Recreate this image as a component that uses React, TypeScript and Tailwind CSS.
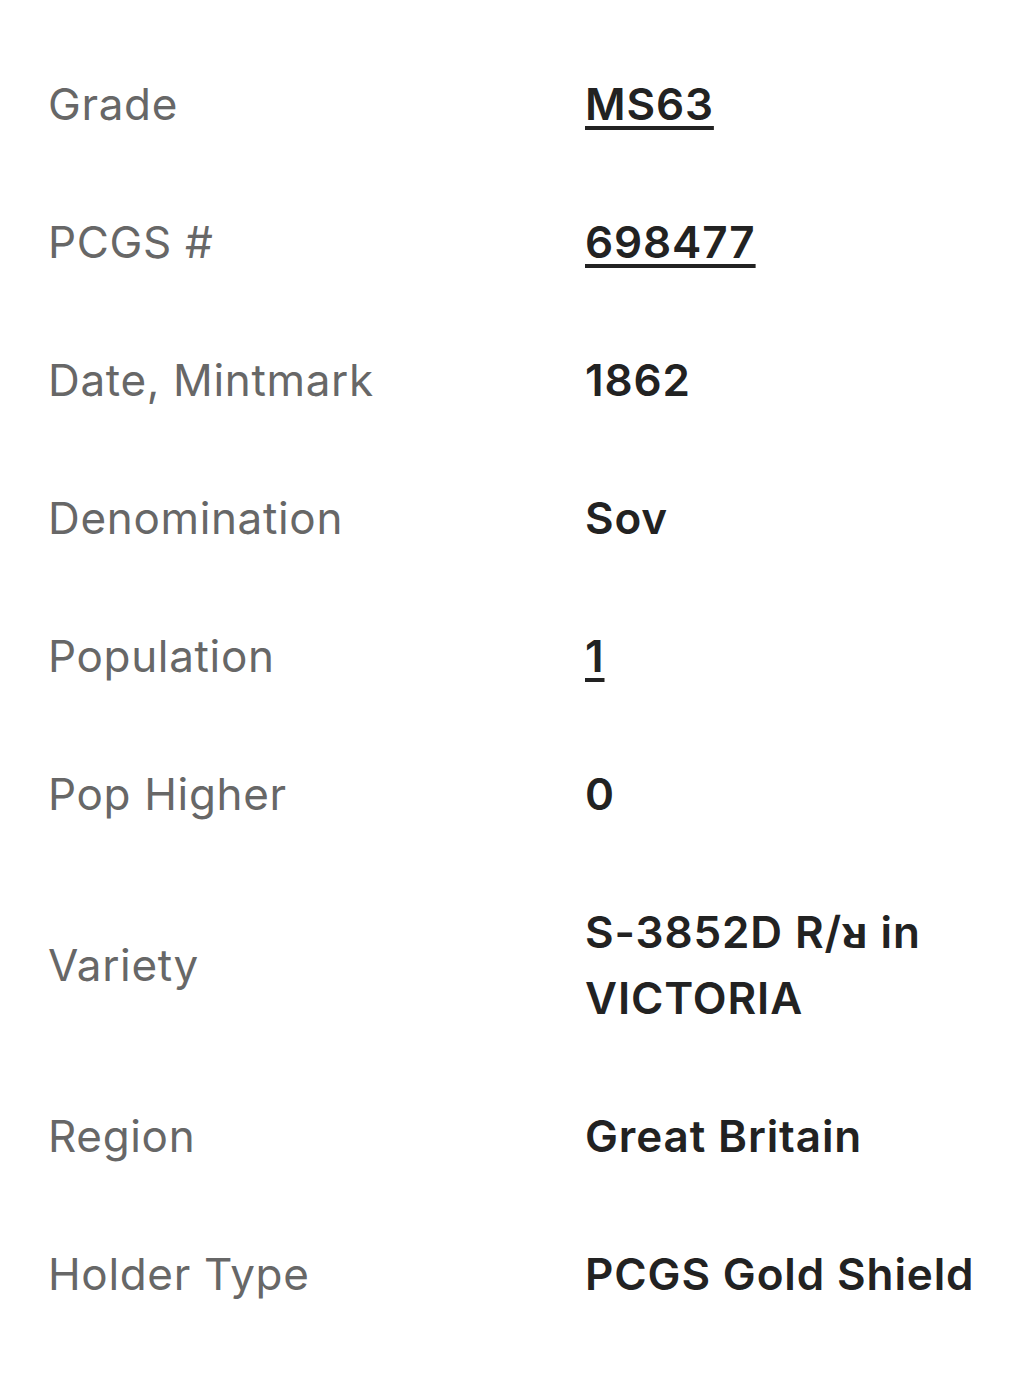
const rows: { label: string; value: string; link?: boolean }[] = [
  { label: "Grade", value: "MS63", link: true },
  { label: "PCGS #", value: "698477", link: true },
  { label: "Date, Mintmark", value: "1862" },
  { label: "Denomination", value: "Sov" },
  { label: "Population", value: "1", link: true },
  { label: "Pop Higher", value: "0" },
  { label: "Variety", value: "S-3852D R/ᴚ in VICTORIA" },
  { label: "Region", value: "Great Britain" },
  { label: "Holder Type", value: "PCGS Gold Shield" },
];

export default function App() {
  return (
    <div className="min-h-[1392px] bg-white px-12 pt-[35px] pb-12 font-['Inter',sans-serif]">
      <dl className="grid grid-cols-[537px_1fr]">
        {rows.map(r => (
          <div key={r.label} className="contents">
            <dt className="py-9 text-[44px] leading-[66px] tracking-[0.015em] text-[#676767] flex items-center">{r.label}</dt>
            <dd className="py-9 text-[44px] leading-[66px] tracking-[0.02em] font-semibold text-[#222]">
              {r.link
                ? <a href="#" className="underline decoration-[4px] underline-offset-[6px]">{r.value}</a>
                : r.value}
            </dd>
          </div>
        ))}
      </dl>
    </div>
  );
}
